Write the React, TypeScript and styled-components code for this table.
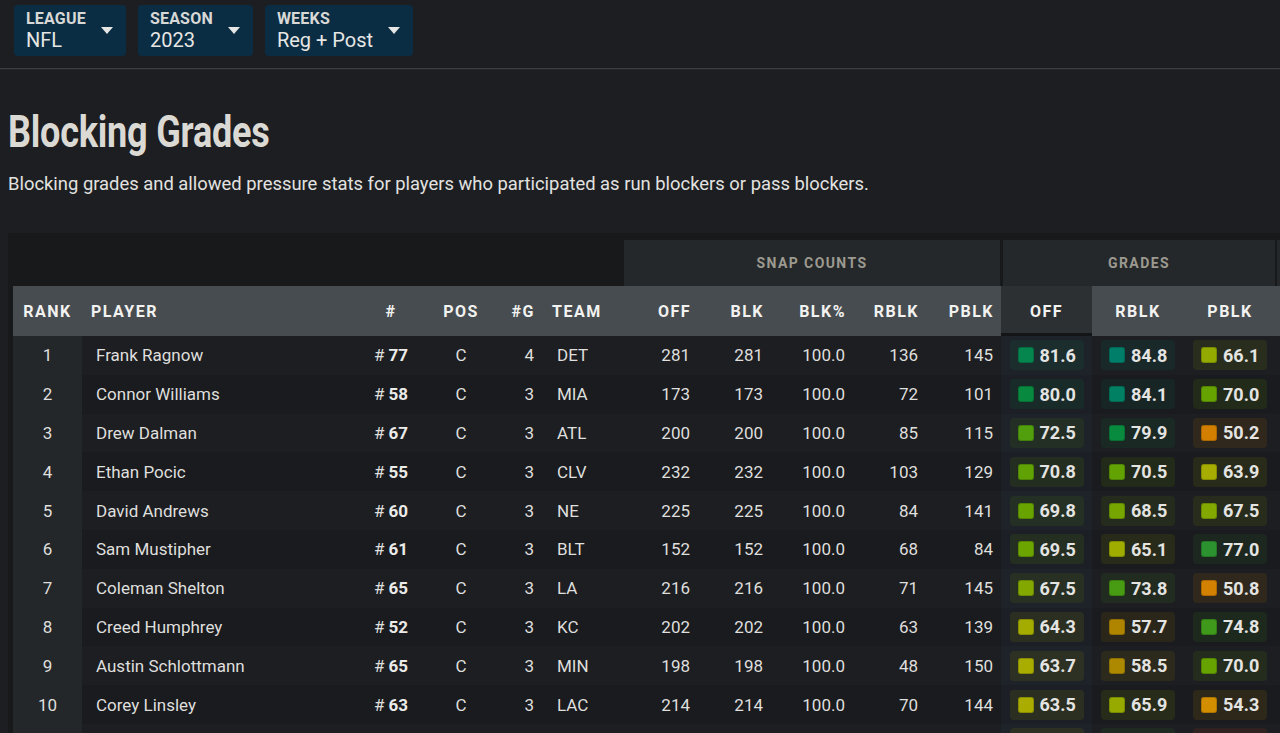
import React from 'react';
import styled, { createGlobalStyle } from 'styled-components';

const GlobalStyle = createGlobalStyle`
  html, body { margin: 0; padding: 0; background: #1d1e21; overflow: hidden; }
  body { font-family: Roboto, "Noto Sans", "Liberation Sans", sans-serif; color: #e0e0e0; }
  * { box-sizing: border-box; }
`;

type Align = 'left' | 'center' | 'right';

interface ColDef {
  key: string;
  label: string;
  width: number;
  align: Align;
  hp?: [number, number];
  cp?: [number, number];
}

const columns: ColDef[] = [
  { key: 'rank', label: 'RANK', width: 69, align: 'center' },
  { key: 'player', label: 'PLAYER', width: 280, align: 'left', hp: [9, 0], cp: [14, 0] },
  { key: 'jersey', label: '#', width: 58, align: 'center' },
  { key: 'pos', label: 'POS', width: 82, align: 'center' },
  { key: 'games', label: '#G', width: 40, align: 'right', hp: [0, 7], cp: [0, 8] },
  { key: 'team', label: 'TEAM', width: 82, align: 'left', hp: [10, 0], cp: [15, 0] },
  { key: 'off', label: 'OFF', width: 74, align: 'right', hp: [0, 7], cp: [0, 8] },
  { key: 'blk', label: 'BLK', width: 73, align: 'right', hp: [0, 7], cp: [0, 8] },
  { key: 'blkp', label: 'BLK%', width: 82, align: 'right', hp: [0, 7], cp: [0, 8] },
  { key: 'rblk', label: 'RBLK', width: 73, align: 'right', hp: [0, 7], cp: [0, 8] },
  { key: 'pblk', label: 'PBLK', width: 75, align: 'right', hp: [0, 7], cp: [0, 8] },
  { key: 'gOff', label: 'OFF', width: 91, align: 'center' },
  { key: 'gRblk', label: 'RBLK', width: 92, align: 'center' },
  { key: 'gPblk', label: 'PBLK', width: 92, align: 'center' },
  { key: 'more', label: '', width: 12, align: 'center' },
];

const TEMPLATE = columns.map((c) => `${c.width}px`).join(' ');

interface Player {
  rank: number;
  name: string;
  jersey: number;
  pos: string;
  games: number;
  team: string;
  off: number;
  blk: number;
  blkp: string;
  rblk: number;
  pblk: number;
  gOff: number;
  gRblk: number;
  gPblk: number;
}

const players: Player[] = [
  { rank: 1, name: 'Frank Ragnow', jersey: 77, pos: 'C', games: 4, team: 'DET', off: 281, blk: 281, blkp: '100.0', rblk: 136, pblk: 145, gOff: 81.6, gRblk: 84.8, gPblk: 66.1 },
  { rank: 2, name: 'Connor Williams', jersey: 58, pos: 'C', games: 3, team: 'MIA', off: 173, blk: 173, blkp: '100.0', rblk: 72, pblk: 101, gOff: 80.0, gRblk: 84.1, gPblk: 70.0 },
  { rank: 3, name: 'Drew Dalman', jersey: 67, pos: 'C', games: 3, team: 'ATL', off: 200, blk: 200, blkp: '100.0', rblk: 85, pblk: 115, gOff: 72.5, gRblk: 79.9, gPblk: 50.2 },
  { rank: 4, name: 'Ethan Pocic', jersey: 55, pos: 'C', games: 3, team: 'CLV', off: 232, blk: 232, blkp: '100.0', rblk: 103, pblk: 129, gOff: 70.8, gRblk: 70.5, gPblk: 63.9 },
  { rank: 5, name: 'David Andrews', jersey: 60, pos: 'C', games: 3, team: 'NE', off: 225, blk: 225, blkp: '100.0', rblk: 84, pblk: 141, gOff: 69.8, gRblk: 68.5, gPblk: 67.5 },
  { rank: 6, name: 'Sam Mustipher', jersey: 61, pos: 'C', games: 3, team: 'BLT', off: 152, blk: 152, blkp: '100.0', rblk: 68, pblk: 84, gOff: 69.5, gRblk: 65.1, gPblk: 77.0 },
  { rank: 7, name: 'Coleman Shelton', jersey: 65, pos: 'C', games: 3, team: 'LA', off: 216, blk: 216, blkp: '100.0', rblk: 71, pblk: 145, gOff: 67.5, gRblk: 73.8, gPblk: 50.8 },
  { rank: 8, name: 'Creed Humphrey', jersey: 52, pos: 'C', games: 3, team: 'KC', off: 202, blk: 202, blkp: '100.0', rblk: 63, pblk: 139, gOff: 64.3, gRblk: 57.7, gPblk: 74.8 },
  { rank: 9, name: 'Austin Schlottmann', jersey: 65, pos: 'C', games: 3, team: 'MIN', off: 198, blk: 198, blkp: '100.0', rblk: 48, pblk: 150, gOff: 63.7, gRblk: 58.5, gPblk: 70.0 },
  { rank: 10, name: 'Corey Linsley', jersey: 63, pos: 'C', games: 3, team: 'LAC', off: 214, blk: 214, blkp: '100.0', rblk: 70, pblk: 144, gOff: 63.5, gRblk: 65.9, gPblk: 54.3 },
  { rank: 11, name: 'Tyler Biadasz', jersey: 63, pos: 'C', games: 3, team: 'WAS', off: 210, blk: 210, blkp: '100.0', rblk: 80, pblk: 130, gOff: 62.9, gRblk: 76.2, gPblk: 44.6 },
];

const stops: [number, [number, number, number]][] = [
  [44, [200, 70, 40]],
  [50, [210, 126, 0]],
  [54, [214, 143, 0]],
  [58, [172, 132, 0]],
  [62, [180, 174, 0]],
  [65, [160, 172, 0]],
  [70, [102, 163, 0]],
  [74, [70, 156, 20]],
  [77, [44, 146, 48]],
  [80, [7, 138, 64]],
  [85, [0, 126, 108]],
];

function gradeRgb(v: number): [number, number, number] {
  if (v <= stops[0][0]) return stops[0][1];
  for (let i = 1; i < stops.length; i++) {
    const [b, cb] = stops[i];
    const [a, ca] = stops[i - 1];
    if (v <= b) {
      const t = (v - a) / (b - a);
      return [0, 1, 2].map((k) => Math.round(ca[k] + (cb[k] - ca[k]) * t)) as [number, number, number];
    }
  }
  return stops[stops.length - 1][1];
}

/* ---------- top bar ---------- */

const TopBar = styled.header`
  display: flex;
  gap: 12px;
  padding: 5px 14px 0;
  height: 69px;
  border-bottom: 1px solid #3c3d40;
  box-shadow: 0 1px 0 #252628;
`;

const Dropdown = styled.button`
  display: flex;
  align-items: center;
  gap: 15px;
  height: 51px;
  padding: 5px 13px 4px 12px;
  background: #0a2d43;
  border: none;
  border-radius: 4px;
  text-align: left;
  cursor: pointer;
`;

const DropText = styled.div`
  display: flex;
  flex-direction: column;
`;

const DropLabel = styled.span`
  font-family: Roboto, sans-serif;
  font-weight: 700;
  font-size: 16px;
  line-height: 18px;
  letter-spacing: 0.2px;
  color: #d8d8d6;
  text-transform: uppercase;
`;

const DropValue = styled.span`
  font-family: Roboto, sans-serif;
  font-size: 20px;
  line-height: 24px;
  color: #e6e6e4;
  white-space: nowrap;
`;

const Caret = styled.span`
  width: 0;
  height: 0;
  border-left: 6.5px solid transparent;
  border-right: 6.5px solid transparent;
  border-top: 7px solid #e6e6e4;
  margin-top: -2px;
`;

/* ---------- content ---------- */

const Main = styled.main`
  padding-left: 8px;
`;

const Title = styled.h1`
  margin: 37px 0 0;
  font-family: Roboto, sans-serif;
  font-weight: 700;
  font-size: 44px;
  line-height: 52px;
  color: #dbd9d4;
  transform: scaleX(0.82);
  transform-origin: left center;
  letter-spacing: -0.3px;
`;

const Subtitle = styled.p`
  margin: 13px 0 0;
  font-size: 18.4px;
  line-height: 25px;
  color: #e2e2e0;
  white-space: nowrap;
`;

const Panel = styled.section`
  margin-top: 37px;
  background: #18191b;
  padding: 7px 0 0 5px;
  overflow: hidden;
`;

const Table = styled.div`
  width: max-content;
`;

const GridRow = styled.div`
  display: grid;
  grid-template-columns: ${TEMPLATE};
`;

const GroupRow = styled(GridRow)`
  height: 46px;
`;

const GroupCell = styled.div<{ $span: [number, number]; $filled?: boolean; $bl?: number; $br?: number }>`
  grid-column: ${(p) => `${p.$span[0]} / ${p.$span[1]}`};
  display: flex;
  align-items: center;
  justify-content: center;
  background: ${(p) => (p.$filled ? '#25282a' : 'transparent')};
  border-left: ${(p) => p.$bl ?? 0}px solid #18191b;
  border-right: ${(p) => p.$br ?? 0}px solid #18191b;
  font-weight: 700;
  font-size: 14px;
  letter-spacing: 1.4px;
  color: #9c9a90;
`;

const HeadRow = styled(GridRow)`
  height: 50px;
  background: #474c50;
`;

const HeadCell = styled.div<{ $align: Align; $pl: number; $pr: number; $sorted?: boolean }>`
  display: flex;
  align-items: center;
  justify-content: ${(p) => (p.$align === 'left' ? 'flex-start' : p.$align === 'right' ? 'flex-end' : 'center')};
  padding: 0 ${(p) => p.$pr}px 0 ${(p) => p.$pl}px;
  font-weight: 700;
  font-size: 16px;
  letter-spacing: 1.5px;
  color: #f2f2f0;
  background: ${(p) => (p.$sorted ? '#2d3033' : 'transparent')};
  border-bottom: ${(p) => (p.$sorted ? '3px solid #141517' : '0')};
  padding-top: ${(p) => (p.$sorted ? '3px' : '0')};
  white-space: nowrap;
`;

const BodyRow = styled(GridRow)<{ $odd: boolean }>`
  height: 38.8px;
  background: ${(p) => (p.$odd ? '#1d1e21' : '#1a1b1e')};
`;

const Cell = styled.div<{ $align: Align; $pl: number; $pr: number; $kind?: 'rank' | 'sorted' }>`
  display: flex;
  align-items: center;
  justify-content: ${(p) => (p.$align === 'left' ? 'flex-start' : p.$align === 'right' ? 'flex-end' : 'center')};
  padding: 0 ${(p) => p.$pr}px 0 ${(p) => p.$pl}px;
  font-size: 17px;
  color: #dfdfdd;
  white-space: nowrap;
  background: ${(p) =>
    p.$kind === 'rank' ? '#24272a' : p.$kind === 'sorted' ? 'rgba(50, 100, 150, 0.07)' : 'transparent'};
`;

const Jersey = styled.span`
  color: #dfdfdd;
  b {
    font-weight: 700;
    color: #ebebe9;
  }
`;

const Chip = styled.div<{ $rgb: string }>`
  display: flex;
  align-items: center;
  gap: 6px;
  width: 74px;
  height: 30px;
  padding: 0 8px;
  border-radius: 4px;
  background: rgba(${(p) => p.$rgb}, 0.11);
`;

const Swatch = styled.span<{ $rgb: string }>`
  width: 16px;
  height: 16px;
  flex: none;
  border-radius: 3px;
  background: rgb(${(p) => p.$rgb});
  box-shadow: inset 0 0 0 1px rgba(0, 0, 0, 0.18);
`;

const ChipValue = styled.span`
  font-weight: 700;
  font-size: 18px;
  color: #e4e4e2;
`;

function GradeChip({ value }: { value: number }) {
  const rgb = gradeRgb(value).join(', ');
  return (
    <Chip $rgb={rgb}>
      <Swatch $rgb={rgb} />
      <ChipValue>{value.toFixed(1)}</ChipValue>
    </Chip>
  );
}

function renderValue(key: string, p: Player): React.ReactNode {
  switch (key) {
    case 'rank':
      return p.rank;
    case 'player':
      return p.name;
    case 'jersey':
      return (
        <Jersey>
          # <b>{p.jersey}</b>
        </Jersey>
      );
    case 'gOff':
      return <GradeChip value={p.gOff} />;
    case 'gRblk':
      return <GradeChip value={p.gRblk} />;
    case 'gPblk':
      return <GradeChip value={p.gPblk} />;
    case 'more':
      return null;
    default:
      return (p as unknown as Record<string, React.ReactNode>)[key];
  }
}

const dropdowns = [
  { label: 'League', value: 'NFL' },
  { label: 'Season', value: '2023' },
  { label: 'Weeks', value: 'Reg + Post' },
];

export default function App() {
  return (
    <>
      <GlobalStyle />
      <TopBar>
        {dropdowns.map((d) => (
          <Dropdown key={d.label}>
            <DropText>
              <DropLabel>{d.label}</DropLabel>
              <DropValue>{d.value}</DropValue>
            </DropText>
            <Caret />
          </Dropdown>
        ))}
      </TopBar>
      <Main>
        <Title>Blocking Grades</Title>
        <Subtitle>
          Blocking grades and allowed pressure stats for players who participated as run blockers or pass blockers.
        </Subtitle>
        <Panel>
          <Table>
            <GroupRow>
              <GroupCell $span={[1, 7]} />
              <GroupCell $span={[7, 12]} $filled $br={1}>
                SNAP COUNTS
              </GroupCell>
              <GroupCell $span={[12, 15]} $filled $bl={2} $br={1}>
                GRADES
              </GroupCell>
              <GroupCell $span={[15, 16]} $filled $bl={1} />
            </GroupRow>
            <HeadRow>
              {columns.map((c) => (
                <HeadCell
                  key={c.key}
                  $align={c.align}
                  $pl={c.hp?.[0] ?? 0}
                  $pr={c.hp?.[1] ?? 0}
                  $sorted={c.key === 'gOff'}
                >
                  {c.label}
                </HeadCell>
              ))}
            </HeadRow>
            {players.map((p, i) => (
              <BodyRow key={p.rank} $odd={i % 2 === 0}>
                {columns.map((c) => (
                  <Cell
                    key={c.key}
                    $align={c.align}
                    $pl={c.cp?.[0] ?? 0}
                    $pr={c.cp?.[1] ?? 0}
                    $kind={c.key === 'rank' ? 'rank' : c.key === 'gOff' ? 'sorted' : undefined}
                  >
                    {renderValue(c.key, p)}
                  </Cell>
                ))}
              </BodyRow>
            ))}
          </Table>
        </Panel>
      </Main>
    </>
  );
}
